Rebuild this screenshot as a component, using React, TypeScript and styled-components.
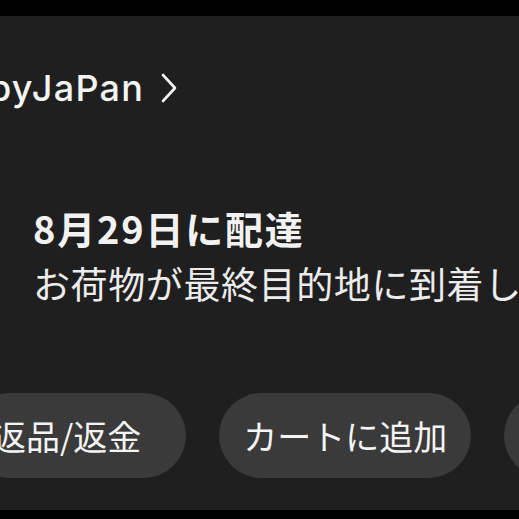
import styled, { createGlobalStyle } from 'styled-components'

const GlobalStyle = createGlobalStyle`
  html, body {
    margin: 0;
    padding: 0;
    background: #000;
  }
  body {
    font-family: Inter, "Noto Sans CJK JP", sans-serif;
    -webkit-font-smoothing: antialiased;
  }
`

const Screen = styled.div`
  width: 519px;
  height: 519px;
  padding-top: 16px;
  box-sizing: border-box;
  overflow: hidden;
`

const Card = styled.div`
  height: 494px;
  background: #1f1f1f;
  display: flex;
  flex-direction: column;
  overflow: hidden;
`

const StoreRow = styled.div`
  display: flex;
  align-items: center;
  gap: 17px;
  margin-top: 49px;
  margin-left: -11px;
  height: 46px;
  color: #f4f4f4;
  font-size: 36px;
  font-weight: 500;
  letter-spacing: 1.3px;
  white-space: nowrap;
`

const Delivery = styled.div`
  display: flex;
  flex-direction: column;
  margin-top: 92px;
  padding-left: 33px;
  white-space: nowrap;
`

const Title = styled.div`
  font-family: "Noto Sans CJK JP", sans-serif;
  font-size: 38px;
  font-weight: 700;
  letter-spacing: 1.8px;
  line-height: 50px;
  color: #f2f2f2;
`

const Status = styled.div`
  font-family: "Noto Sans CJK JP", sans-serif;
  font-size: 37px;
  font-weight: 400;
  letter-spacing: 0.6px;
  line-height: 60px;
  color: #ececec;
`

const Actions = styled.div`
  display: flex;
  gap: 33px;
  margin-top: 80px;
  margin-left: -32px;
`

const Pill = styled.button<{ $right?: number }>`
  flex-shrink: 0;
  height: 85px;
  padding: 0 ${p => p.$right ?? 24}px 0 24px;
  border: none;
  border-radius: 43px;
  background: #3a3a3a;
  color: #f4f4f4;
  font-family: "Noto Sans CJK JP", sans-serif;
  font-size: 34px;
  white-space: nowrap;
`

const Chevron = () => (
  <svg width="16" height="30" viewBox="0 0 16 30" fill="none">
    <path d="M2 2 L14 15 L2 28" stroke="#f4f4f4" strokeWidth="2.6" strokeLinecap="round" strokeLinejoin="round" />
  </svg>
)

export default function App() {
  return (
    <>
      <GlobalStyle />
      <Screen>
        <Card>
          <StoreRow>
            <span>byJaPan</span>
            <Chevron />
          </StoreRow>
          <Delivery>
            <Title>8月29日に配達</Title>
            <Status>お荷物が最終目的地に到着しました</Status>
          </Delivery>
          <Actions>
            <Pill $right={45}>返品/返金</Pill>
            <Pill>カートに追加</Pill>
            <Pill>レビューを書く</Pill>
          </Actions>
        </Card>
      </Screen>
    </>
  )
}
